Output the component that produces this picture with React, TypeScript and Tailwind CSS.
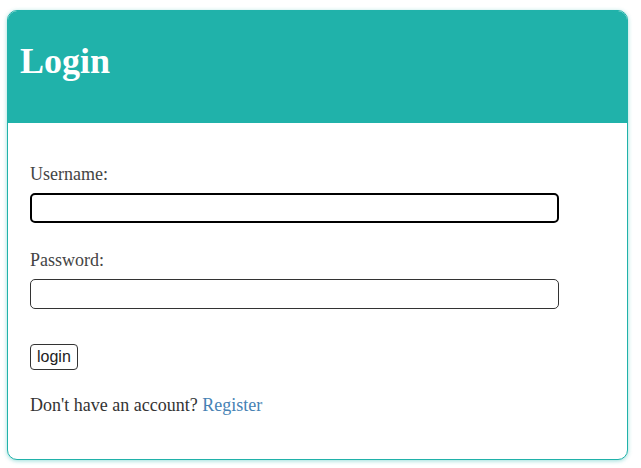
import React from "react";

export default function App() {
  return (
    <div className="min-h-screen bg-white pt-[10px] pl-[7px]" style={{ fontFamily: '"Liberation Serif", "Times New Roman", serif' }}>
      <div className="w-[621px] h-[450px] rounded-[10px] border border-[#20b2aa] bg-white overflow-hidden shadow-[0_1px_4px_rgba(32,178,170,0.45)]">
        {/* Header */}
        <div className="h-[112px] bg-[#20b2aa] pl-[12px] pt-[30px]">
          <h1 className="text-[36px] leading-[41px] font-bold text-white">Login</h1>
        </div>

        {/* Form body */}
        <form className="pl-[22px] pt-[41px] text-[18px] text-[#444]" onSubmit={(e) => e.preventDefault()}>
          <label className="block leading-[21px]">Username:</label>
          <input
            type="text"
            autoFocus
            className="mt-[8px] block w-[529px] h-[30px] rounded-[5px] border-2 border-black outline-none bg-white"
          />

          <label className="block mt-[27px] leading-[21px]">Password:</label>
          <input
            type="password"
            className="mt-[8px] block w-[529px] h-[30px] rounded-[5px] border border-[#333] outline-none bg-white"
          />

          <button
            type="submit"
            className="mt-[35px] block h-[26px] px-[6px] rounded-[4px] border border-[#333] bg-white text-[16px] leading-[20px] text-[#222]"
            style={{ fontFamily: '"Liberation Sans", Arial, sans-serif' }}
          >
            login
          </button>

          <p className="mt-[25px] leading-[21px] text-[#333]">
            Don't have an account? <a href="#" className="text-[#4682b4]">Register</a>
          </p>
        </form>
      </div>
    </div>
  );
}
